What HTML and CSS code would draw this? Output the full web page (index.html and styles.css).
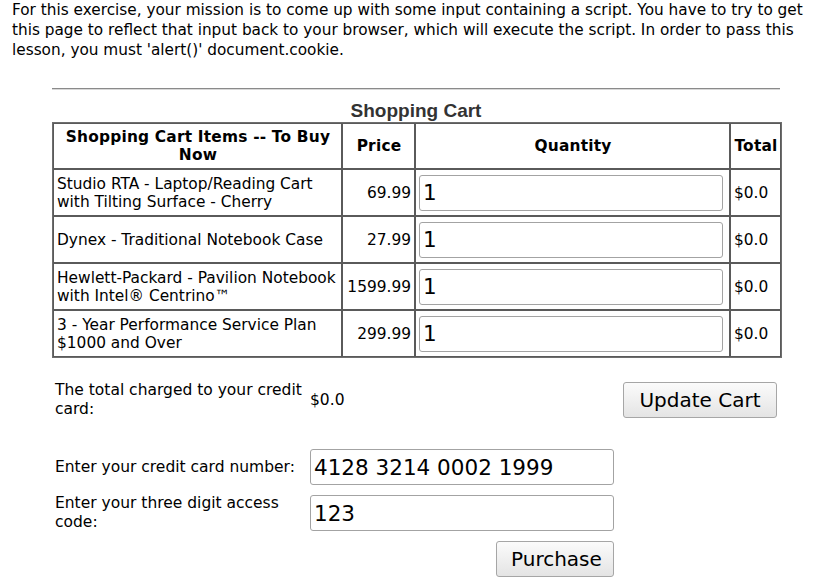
FILE: index.html
```html
<!DOCTYPE html>
<html>
<head>
<meta charset="utf-8">
<title>Reflected XSS</title>
<link rel="stylesheet" href="styles.css">
</head>
<body>
<p class="intro">For this exercise, your mission is to come up with some input containing a script. You have to try to get this page to reflect that input back to your browser, which will execute the script. In order to pass this lesson, you must 'alert()' document.cookie.</p>
<div class="lesson">
  <hr class="rule">
  <h2 class="cart-title">Shopping Cart</h2>
  <table class="cart">
    <colgroup>
      <col class="c-item"><col class="c-price"><col class="c-qty"><col class="c-total">
    </colgroup>
    <thead>
      <tr>
        <th>Shopping Cart Items -- To Buy Now</th>
        <th>Price</th>
        <th>Quantity</th>
        <th>Total</th>
      </tr>
    </thead>
    <tbody>
      <tr>
        <td>Studio RTA - Laptop/Reading Cart with Tilting Surface - Cherry</td>
        <td class="num">69.99</td>
        <td class="qty"><input class="field" type="text" value="1"></td>
        <td>$0.0</td>
      </tr>
      <tr>
        <td>Dynex - Traditional Notebook Case</td>
        <td class="num">27.99</td>
        <td class="qty"><input class="field" type="text" value="1"></td>
        <td>$0.0</td>
      </tr>
      <tr>
        <td>Hewlett-Packard - Pavilion Notebook with Intel® Centrino™</td>
        <td class="num">1599.99</td>
        <td class="qty"><input class="field" type="text" value="1"></td>
        <td>$0.0</td>
      </tr>
      <tr>
        <td>3 - Year Performance Service Plan $1000 and Over</td>
        <td class="num">299.99</td>
        <td class="qty"><input class="field" type="text" value="1"></td>
        <td>$0.0</td>
      </tr>
    </tbody>
  </table>
  <div class="checkout">
    <div class="label">The total charged to your credit card:</div>
    <div class="amount">$0.0</div>
    <div class="end"><button class="btn btn-update" type="button">Update Cart</button></div>
    <div class="spacer"></div>
    <div class="label">Enter your credit card number:</div>
    <div><input class="field field-wide" type="text" value="4128 3214 0002 1999"></div>
    <div></div>
    <div class="label">Enter your three digit access code:</div>
    <div><input class="field field-wide" type="text" value="123"></div>
    <div></div>
    <div></div>
    <div class="end"><button class="btn btn-buy" type="button">Purchase</button></div>
    <div></div>
  </div>
</div>
</body>
</html>
```
FILE: styles.css
```css
html, body {
  margin: 0;
  padding: 0;
  background: #ffffff;
  color: #000000;
  font-family: "DejaVu Sans", Verdana, sans-serif;
}

.intro {
  margin: 0;
  padding: 0 12px 0 12px;
  font-size: 15.3px;
  line-height: 20px;
}

.lesson {
  margin: 28px 0 0 52px;
  width: 728px;
}

.rule {
  margin: 0;
  height: 0;
  border: 0;
  border-top: 1px solid #8a8a8a;
  border-bottom: 1px solid #d8d8d8;
}

.cart-title {
  margin: 10px 0 0 0;
  text-align: center;
  font-family: "Liberation Sans", Arial, sans-serif;
  font-weight: bold;
  font-size: 19px;
  line-height: 22px;
  color: #333333;
}

.cart {
  border-collapse: separate;
  border-spacing: 0;
  table-layout: fixed;
  width: 728px;
  border: 1px solid #6e6e6e;
  font-size: 15.4px;
}

.c-item { width: 289px; }
.c-price { width: 73px; }
.c-qty { width: 315px; }
.c-total { width: 51px; }

.cart th,
.cart td {
  border: 1px solid #5a5a5a;
  padding: 0 2px 0 3px;
  height: 45px;
  vertical-align: middle;
}

.cart th {
  height: 44px;
  font-weight: bold;
  text-align: center;
  line-height: 18px;
  letter-spacing: 0.2px;
}

.cart td {
  line-height: 18px;
}

.cart td.num {
  text-align: right;
  padding-right: 3px;
}

.cart td.qty {
  padding: 0 2px 0 3px;
}

.field {
  box-sizing: border-box;
  display: block;
  width: 304px;
  height: 36px;
  margin: 0;
  padding: 0 3px;
  border: 1px solid #a3a3a3;
  border-radius: 3px;
  background: #ffffff;
  font-family: "DejaVu Sans", Verdana, sans-serif;
  font-size: 21.5px;
  color: #000000;
}

.checkout {
  display: grid;
  grid-template-columns: 255px 304px 163px;
  row-gap: 9px;
  align-items: center;
  margin: 23px 0 0 3px;
  font-size: 15.5px;
  line-height: 19px;
}

.spacer {
  grid-column: 1 / -1;
  height: 12px;
}

.end {
  display: flex;
  justify-content: flex-end;
}

.btn {
  box-sizing: border-box;
  height: 36px;
  margin: 0;
  padding: 0 14px;
  border: 1px solid #a6a6a6;
  border-radius: 3px;
  background: linear-gradient(#fbfbfb, #e4e4e4);
  font-family: "DejaVu Sans", Verdana, sans-serif;
  font-size: 20px;
  color: #000000;
}

.btn-update { width: 154px; }
.btn-buy { width: 118px; }
```
